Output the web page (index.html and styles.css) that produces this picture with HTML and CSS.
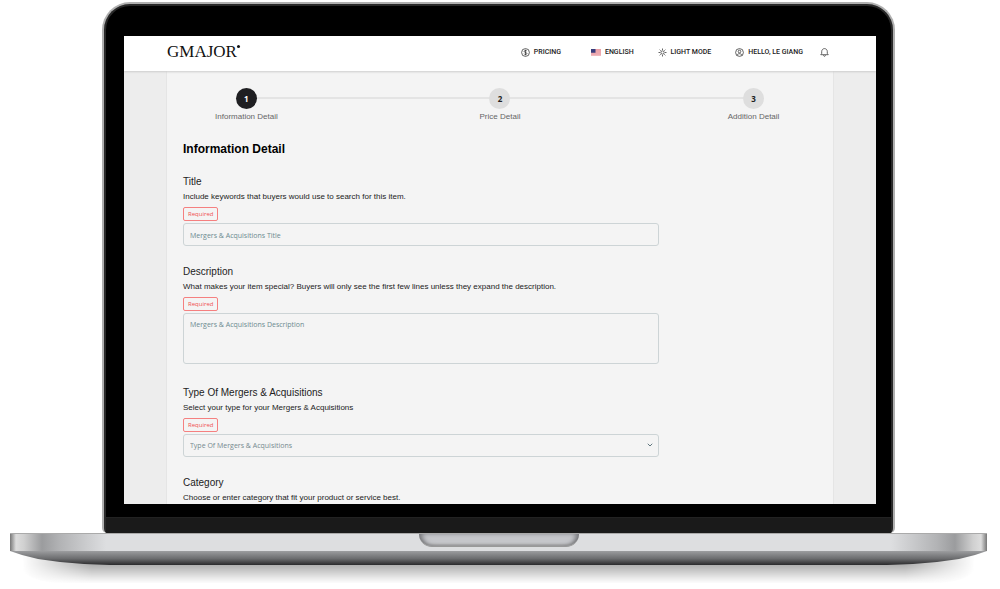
FILE: index.html
```html
<!DOCTYPE html>
<html lang="en">
<head>
<meta charset="utf-8">
<title>GMAJOR - Information Detail</title>
<link rel="stylesheet" href="styles.css">
</head>
<body>
<div class="laptop">
  <div class="lid">
    <div class="screen">
      <header class="topbar">
        <a class="logo" href="#">GMAJOR<span class="logo-dot"></span></a>
        <nav class="nav">
          <a class="nav-item nav-pricing" href="#">
            <svg class="icon" viewBox="0 0 18 18"><circle cx="9" cy="9" r="7.8"/><path d="M11.8 6.4C11.3 5.4 10.3 5 9 5 7.400 5 6.300 5.700 6.300 6.900 6.300 9.600 11.800 8.300 11.800 11 11.800 12.300 10.600 13 9 13 7.600 13 6.500 12.500 6.100 11.400M9 3.400V14.600"/></svg>
            PRICING</a>
          <a class="nav-item nav-language" href="#">
            <svg class="flag" viewBox="0 0 20 14"><path fill="#f7d5d8" d="M0 0h20v14H0z"/><path stroke="#e0717c" stroke-width="1.100" d="M0 1h20M0 3.200h20M0 5.400h20M0 7.600h20M0 9.800h20M0 12h20"/><path fill="#383d7c" d="M0 0h9v7.600H0z"/></svg>
            ENGLISH</a>
          <a class="nav-item" href="#">
            <svg class="icon" viewBox="0 0 18 18"><circle cx="9" cy="9" r="3.300"/><path d="M9 1v3M9 14v3M1 9h3M14 9h3M3.300 3.300l2.100 2.100M12.600 12.600l2.100 2.100M3.300 14.700l2.100-2.100M12.600 5.400l2.100-2.100"/></svg>
            LIGHT MODE</a>
          <a class="nav-item" href="#">
            <svg class="icon" viewBox="0 0 18 18"><circle cx="9" cy="9" r="7.800"/><circle cx="9" cy="7" r="2.600"/><path d="M4.200 14.600C4.600 12.400 6.600 11.400 9 11.400s4.400 1 4.800 3.200"/></svg>
            HELLO, LE GIANG</a>
          <button class="bell" type="button" aria-label="Notifications">
            <svg class="icon" viewBox="0 0 18 18"><path d="M1.500 13.400h15L14.600 10.800V7.200C14.600 3.800 12.200 1.200 9 1.200S3.400 3.800 3.400 7.200V10.800zM7 14.500c.3 2.800 3.700 2.800 4 0"/></svg>
          </button>
        </nav>
      </header>
      <main class="panel">
        <ol class="steps">
          <li class="step step-active"><span class="step-number">1</span>Information Detail</li>
          <li class="step"><span class="step-number">2</span>Price Detail</li>
          <li class="step"><span class="step-number">3</span>Addition Detail</li>
        </ol>
        <h1 class="heading">Information Detail</h1>
        <form class="form">
          <div class="field">
            <label class="label" for="title">Title</label>
            <p class="hint">Include keywords that buyers would use to search for this item.</p>
            <span class="required">Required</span>
            <input class="control" id="title" type="text" placeholder="Mergers &amp; Acquisitions Title">
          </div>
          <div class="field">
            <label class="label" for="description">Description</label>
            <p class="hint">What makes your item special? Buyers will only see the first few lines unless they expand the description.</p>
            <span class="required">Required</span>
            <textarea class="control control-area" id="description" placeholder="Mergers &amp; Acquisitions Description"></textarea>
          </div>
          <div class="field">
            <label class="label" for="type">Type Of Mergers &amp; Acquisitions</label>
            <p class="hint">Select your type for your Mergers &amp; Acquisitions</p>
            <span class="required">Required</span>
            <div class="select-wrap">
              <select class="control control-select" id="type"><option>Type Of Mergers &amp; Acquisitions</option></select>
              <svg class="chevron" viewBox="0 0 12 8"><path d="M1.500 1.500 6 6l4.500-4.500"/></svg>
            </div>
          </div>
          <div class="field">
            <label class="label" for="category">Category</label>
            <p class="hint">Choose or enter category that fit your product or service best.</p>
            <input class="control" id="category" type="text">
          </div>
        </form>
      </main>
    </div>
    <div class="chin"></div>
  </div>
  <div class="base">
    <div class="deck"><div class="notch"></div></div>
    <div class="belly"></div>
  </div>
</div>
</body>
</html>
```
FILE: styles.css
```css
* {
  box-sizing: border-box;
}

body {
  margin: 0;
  background: #fff;
  font-family: "Liberation Sans", Arial, sans-serif;
  color: #222;
}

.laptop {
  padding: 2px 13px 24px 10px;
}

/* Lid and display */
.lid {
  margin: 0 92px;
  padding: 32px 0 0;
  border: 2px solid #b0b0b0;
  border-bottom: 0;
  border-radius: 28px 28px 5px 5px;
  background: #000;
  box-shadow: inset 0 0 0 2px #292929;
  overflow: hidden;
}

.screen {
  margin: 0 17px 13px 20px;
  aspect-ratio: 752 / 468;
  display: flex;
  flex-direction: column;
  overflow: hidden;
  background: #ededed;
}

.chin {
  height: 16px;
  margin: 0 2px;
  border-top: 1px solid #222;
  background: #1a1a1a;
}

/* Header */
.topbar {
  flex: none;
  display: flex;
  align-items: center;
  justify-content: space-between;
  height: 35px;
  padding: 0 47px 3px 43px;
  background: #fff;
  box-shadow: 0 1px 2px #ccc;
  z-index: 1;
}

.logo {
  display: flex;
  font: 17px/20px "Liberation Serif", serif;
  color: #111;
  text-decoration: none;
}

.logo-dot {
  width: 3px;
  height: 3px;
  margin-top: 3px;
  border-radius: 50%;
  background: #111;
}

.nav {
  display: flex;
  align-items: center;
  gap: 24px;
}

.nav-item {
  display: flex;
  align-items: center;
  gap: 4px;
  font: 500 7px/10px Roboto, sans-serif;
  color: #222;
  text-decoration: none;
}

.nav-pricing {
  margin-right: 6px;
}

.icon {
  display: block;
  width: 9px;
  height: 9px;
  fill: none;
  stroke: #333;
  stroke-width: 1.5;
}

.flag {
  width: 10px;
  height: 7px;
}

.bell {
  margin-left: -7px;
  padding: 0;
  border: 0;
  background: none;
}

/* Page panel */
.panel {
  flex: 1 0 auto;
  margin: 0 42px;
  padding: 17px 16px;
  border: solid #e5e5e5;
  border-width: 0 1px;
  background: #f4f4f4;
}

.steps {
  position: relative;
  display: flex;
  justify-content: space-between;
  margin: 0;
  padding: 0;
  list-style: none;
}

.steps::before {
  content: "";
  position: absolute;
  top: 9px;
  left: 10%;
  right: 10%;
  height: 2px;
  background: #e4e4e4;
}

.step {
  position: relative;
  display: flex;
  flex-direction: column;
  align-items: center;
  gap: 2px;
  width: 20%;
  font-size: 8px;
  line-height: 11px;
  color: #666;
}

.step-number {
  width: 21px;
  height: 21px;
  border-radius: 50%;
  background: #dedede;
  color: #222;
  font: bold 8px/21px "Open Sans", sans-serif;
  text-align: center;
}

.step-active .step-number {
  background: #1f1f22;
  color: #fff;
}

.heading {
  margin: 19px 0;
  font-size: 12px;
  line-height: 16px;
  color: #000;
}

/* Form */
.form {
  display: flex;
  flex-direction: column;
  gap: 20px;
  width: 75%;
}

.field {
  display: flex;
  flex-direction: column;
  align-items: flex-start;
}

.label {
  font-size: 10px;
  line-height: 12px;
}

.hint {
  margin: 4px 0 5px;
  font-size: 8px;
  line-height: 10px;
  white-space: nowrap;
}

.required {
  margin-bottom: 2px;
  padding: 0 4px;
  border: 1px solid #f58080;
  border-radius: 2px;
  font: 6px/12px "Open Sans", sans-serif;
  color: #f05050;
}

.control {
  display: block;
  width: 100%;
  height: 23px;
  margin: 0;
  padding: 1px 6px 0;
  border: 1px solid #cdd4d6;
  border-radius: 3px;
  background: transparent;
  font: 7px/10px "Open Sans", sans-serif;
  color: #74898f;
}

.control::placeholder {
  color: #6b8a90;
  opacity: 1;
}

.control-area {
  height: 51px;
  margin-bottom: 3px;
  padding: 6px;
  resize: none;
}

.select-wrap {
  position: relative;
  width: 100%;
}

.control-select {
  appearance: none;
}

.chevron {
  position: absolute;
  top: 9px;
  right: 6px;
  width: 6px;
  height: 4px;
  fill: none;
  stroke: #61777f;
  stroke-width: 2;
  pointer-events: none;
}

/* Base */
.base {
  position: relative;
}

.base::before {
  content: "";
  position: absolute;
  z-index: -1;
  top: 18px;
  bottom: -18px;
  left: 12px;
  right: 12px;
  border-radius: 0 0 40px 40px / 0 0 16px 16px;
  background: linear-gradient(#aaa 40%, #fff);
  mask-image: linear-gradient(90deg, transparent, #000 70px, #000 calc(100% - 70px), transparent);
  filter: blur(2px);
}

.deck {
  height: 18px;
  border-top: 1px solid #aaa;
  background: linear-gradient(90deg, #777 0, #ddd 6px, #d0d0d0 14px, #9b9c9e 32px, #b2b3b5 50px, #dddee0 96px, #dddee0 calc(100% - 96px), #b2b3b5 calc(100% - 50px), #9b9c9e calc(100% - 32px), #d0d0d0 calc(100% - 14px), #ddd calc(100% - 6px), #777 100%);
}

.notch {
  width: 160px;
  height: 13px;
  margin: 0 auto;
  border-bottom: 1px solid #999;
  border-radius: 0 0 13px 13px;
  background: #c5c6ca;
  box-shadow: inset 5px 0 5px -2px #77787c, inset -5px 0 5px -2px #77787c, inset 0 -2px 2px #aaa;
}

.belly {
  height: 14px;
  clip-path: polygon(0 0, 100% 0, calc(100% - 12px) 4px, calc(100% - 28px) 8px, calc(100% - 50px) 11px, calc(100% - 74px) 13px, calc(100% - 100px) 100%, 100px 100%, 74px 13px, 50px 11px, 28px 8px, 12px 4px);
  background: linear-gradient(#9c9d9f, #6b6c6e 55%, #29292b);
}
```
